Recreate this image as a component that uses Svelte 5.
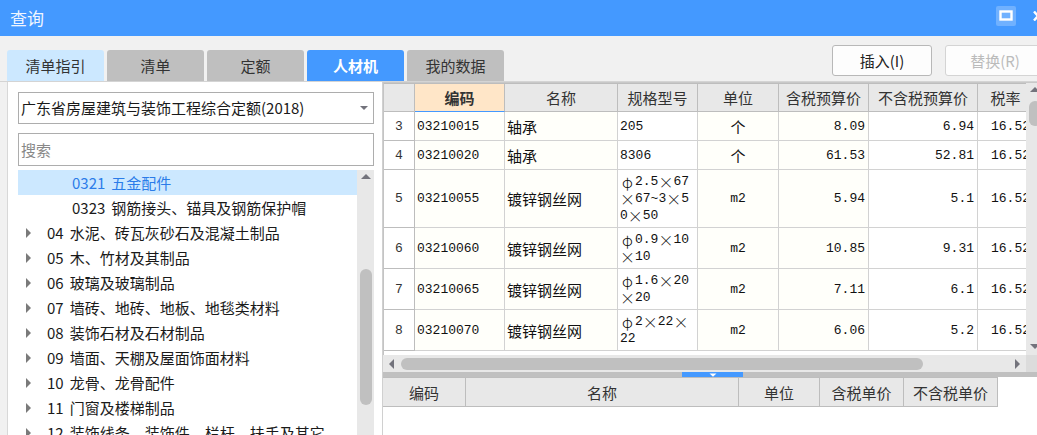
<script lang="ts">
  type TreeNode = { code: string; title: string; leaf?: boolean };
  type Material = {
    no: number;
    code: string;
    name: string;
    spec: string[];
    unit: string;
    taxed: string;
    untaxed: string;
    rate: string;
  };

  const tabs = ['清单指引', '清单', '定额', '人材机', '我的数据'];
  let activeTab = $state('人材机');
  const hoverTab = '清单指引';

  const library = '广东省房屋建筑与装饰工程综合定额(2018)';
  let keyword = $state('');

  const nodes: TreeNode[] = [
    { code: '0321', title: '五金配件', leaf: true },
    { code: '0323', title: '钢筋接头、锚具及钢筋保护帽', leaf: true },
    { code: '04', title: '水泥、砖瓦灰砂石及混凝土制品' },
    { code: '05', title: '木、竹材及其制品' },
    { code: '06', title: '玻璃及玻璃制品' },
    { code: '07', title: '墙砖、地砖、地板、地毯类材料' },
    { code: '08', title: '装饰石材及石材制品' },
    { code: '09', title: '墙面、天棚及屋面饰面材料' },
    { code: '10', title: '龙骨、龙骨配件' },
    { code: '11', title: '门窗及楼梯制品' },
    { code: '12', title: '装饰线条、装饰件、栏杆、扶手及其它' }
  ];
  let selected = $state('0321');

  const rows: Material[] = [
    { no: 3, code: '03210015', name: '轴承', spec: ['205'], unit: '个', taxed: '8.09', untaxed: '6.94', rate: '16.52' },
    { no: 4, code: '03210020', name: '轴承', spec: ['8306'], unit: '个', taxed: '61.53', untaxed: '52.81', rate: '16.52' },
    { no: 5, code: '03210055', name: '镀锌钢丝网', spec: ['φ2.5×67', '×67~3×5', '0×50'], unit: 'm2', taxed: '5.94', untaxed: '5.1', rate: '16.52' },
    { no: 6, code: '03210060', name: '镀锌钢丝网', spec: ['φ0.9×10', '×10'], unit: 'm2', taxed: '10.85', untaxed: '9.31', rate: '16.52' },
    { no: 7, code: '03210065', name: '镀锌钢丝网', spec: ['φ1.6×20', '×20'], unit: 'm2', taxed: '7.11', untaxed: '6.1', rate: '16.52' },
    { no: 8, code: '03210070', name: '镀锌钢丝网', spec: ['φ2×22×', '22'], unit: 'm2', taxed: '6.06', untaxed: '5.2', rate: '16.52' }
  ];

  // φ and × take a full-width cell, everything else is half-width
  function split(line: string): string[] {
    return line.split(/([φ×])/).filter((s) => s !== '');
  }
  const isWide = (s: string) => s === 'φ' || s === '×';
</script>

<div class="dialog">
  <header class="titlebar">
    <h1>查询</h1>
    <button type="button" class="win-btn boxed" aria-label="最大化">
      <svg width="14" height="12" viewBox="0 0 14 12"><rect x="1.5" y="1.5" width="11" height="8" fill="none" stroke="#fff" stroke-width="2.4" /></svg>
    </button>
    <button type="button" class="win-btn" aria-label="关闭">
      <svg width="10" height="10" viewBox="0 0 10 10"><path d="M1 0.5 9 9.5M9 0.5 1 9.5" stroke="#fff" stroke-width="2.4" /></svg>
    </button>
  </header>

  <div class="toolbar">
    <nav class="tabs">
      {#each tabs as tab}
        <button
          type="button"
          class="tab"
          class:active={tab === activeTab}
          class:hover={tab === hoverTab && tab !== activeTab}
          onclick={() => (activeTab = tab)}
        >{tab}</button>
      {/each}
    </nav>
    <div class="actions">
      <button type="button" class="action">插入(I)</button>
      <button type="button" class="action" disabled>替换(R)</button>
    </div>
  </div>

  <main class="content">
    <aside class="side">
      <div class="combo">
        <select aria-label="定额库">
          <option>{library}</option>
        </select>
        <span class="tri down small"></span>
      </div>
      <input class="search" type="text" placeholder="搜索" aria-label="搜索" bind:value={keyword} />

      <div class="tree-wrap">
        <ul class="tree">
          {#each nodes as node}
            <li>
              <button
                type="button"
                class="node"
                class:selected={node.code === selected}
                class:leaf={node.leaf}
                onclick={() => (selected = node.code)}
              >
                {#if !node.leaf}<span class="tri right"></span>{/if}
                <span class="node-code">{node.code}</span>
                <span>{node.title}</span>
              </button>
            </li>
          {/each}
        </ul>
        <div class="vscroll">
          <span class="tri up"></span>
          <div class="thumb tree-thumb"></div>
        </div>
      </div>
    </aside>

    <section class="main">
      <div class="grid-row">
        <div class="grid-clip">
          <table class="grid">
            <colgroup>
              <col class="c-no" /><col class="c-code" /><col class="c-name" /><col class="c-spec" />
              <col class="c-unit" /><col class="c-taxed" /><col class="c-untaxed" /><col class="c-rate" />
            </colgroup>
            <thead>
              <tr>
                <th></th>
                <th class="sorted">编码</th>
                <th>名称</th>
                <th>规格型号</th>
                <th>单位</th>
                <th>含税预算价</th>
                <th>不含税预算价</th>
                <th>税率</th>
              </tr>
            </thead>
            <tbody>
              {#each rows as row}
                <tr>
                  <td class="no">{row.no}</td>
                  <td class="tint">{row.code}</td>
                  <td class="tint cjk">{row.name}</td>
                  <td>
                    {#each row.spec as line}
                      <div class="spec-line">{#each split(line) as part}<span class:wide={isWide(part)}>{part}</span>{/each}</div>
                    {/each}
                  </td>
                  <td class="tint center" class:cjk={row.unit === '个'}>{row.unit}</td>
                  <td class="tint num">{row.taxed}</td>
                  <td class="num">{row.untaxed}</td>
                  <td class="num">{row.rate}</td>
                </tr>
              {/each}
            </tbody>
          </table>
        </div>
        <div class="vscroll grid-vscroll">
          <span class="tri up"></span>
          <div class="thumb grid-thumb"></div>
          <span class="tri down"></span>
        </div>
      </div>

      <div class="hscroll">
        <div class="htrack">
          <span class="tri left"></span>
          <div class="hthumb-area"><div class="hthumb"></div></div>
          <span class="tri right dark"></span>
        </div>
        <div class="corner"></div>
      </div>

      <div class="splitter">
        <button type="button" class="handle" aria-label="收起">
          <svg width="8" height="4" viewBox="0 0 8 4"><path d="M0.5 0.5H7.5L4 3.8Z" fill="#fff" /></svg>
        </button>
      </div>

      <div class="detail">
        <table class="grid lower">
          <colgroup>
            <col class="d-code" /><col class="d-name" /><col class="d-unit" /><col class="d-taxed" /><col class="d-untaxed" />
          </colgroup>
          <thead>
            <tr><th>编码</th><th>名称</th><th>单位</th><th>含税单价</th><th>不含税单价</th></tr>
          </thead>
        </table>
      </div>
    </section>
  </main>
</div>

<style>
  :global(body) { overflow: hidden; background: #f1f1f1; }

  .dialog {
    display: flex;
    flex-direction: column;
    height: 100vh;
    /* the window hangs over the right edge of the screen */
    margin-right: -16px;
    font-family: "Noto Sans CJK SC", "Noto Sans", sans-serif;
    font-size: 15px;
    line-height: 24px;
    color: #222;
  }
  button, input, select { font: inherit; color: inherit; box-sizing: border-box; }
  button { border: 0; padding: 0; background: none; }

  .titlebar {
    display: flex;
    align-items: center;
    gap: 14px;
    height: 36px;
    flex: none;
    padding: 0 7px 0 10px;
    background: #4499ff;
  }
  h1 {
    flex: 1;
    margin: 0;
    font-size: 17px;
    font-weight: 400;
    color: #f0f6ff;
  }
  .win-btn {
    display: grid;
    place-items: center;
    width: 16px;
    height: 20px;
    margin-bottom: 4px;
  }
  .win-btn.boxed { width: 20px; background: #70b1ff; border-radius: 2px; }

  .toolbar {
    display: flex;
    justify-content: space-between;
    align-items: flex-end;
    height: 46px;
    flex: none;
    padding: 0 8px 0 7px;
    box-sizing: border-box;
    background: #f1f1f1;
    border-bottom: 1px solid #d4d4d4;
  }
  .tabs { display: flex; gap: 3px; }
  .tab {
    width: 97px;
    height: 31px;
    background: #bfbfbf;
    border-radius: 3px 3px 0 0;
    color: #333;
  }
  .tab.hover { background: #cce8ff; }
  .tab.active { background: #4499ff; color: #fff; font-weight: 700; }
  .actions { display: flex; gap: 13px; padding-bottom: 5px; }
  .action {
    width: 100px;
    height: 31px;
    background: #fdfdfd;
    border: 1px solid #b8b8b8;
    border-radius: 3px;
  }
  .action:disabled { color: #bbb; border-color: #d4d4d4; }

  .content { display: flex; flex: 1; min-height: 0; }

  .side {
    display: flex;
    flex-direction: column;
    width: 376px;
    flex: none;
    box-sizing: border-box;
    margin-left: 7px;
    padding: 10px 8px 0 10px;
    background: #fff;
    border-left: 1px solid #d8d8d8;
    border-right: 1px solid #d0d0d0;
    color: #1a1a1a;
  }
  .combo { position: relative; margin-bottom: 9px; }
  .combo select, .search {
    display: block;
    width: 100%;
    height: 32px;
    padding: 0 2px;
    appearance: none;
    background: #fff;
    border: 1px solid #adadad;
    border-radius: 0;
    outline: none;
  }
  .combo .tri { position: absolute; right: 6px; top: 14px; }
  .search { height: 33px; flex: none; }
  .search::placeholder { color: #888; opacity: 1; }

  .tree-wrap { display: flex; flex: 1; min-height: 0; margin-top: 4px; }
  .tree {
    flex: 1;
    min-width: 0;
    margin: 0;
    padding: 0;
    list-style: none;
    overflow: hidden;
  }
  .node {
    display: flex;
    align-items: center;
    gap: 6px;
    width: 100%;
    height: 25px;
    padding-left: 8px;
    white-space: nowrap;
  }
  .node .tri { margin-right: 10px; }
  .node.leaf { padding-left: 54px; }
  .node.selected { background: #cce8ff; color: #2b7ce9; }

  .tri { flex: none; width: 0; height: 0; border: 5px solid transparent; }
  .tri.up { border-top: 0; border-bottom-color: #73737c; }
  .tri.down { border-bottom: 0; border-top-color: #73737c; }
  .tri.left { border-left: 0; border-right-color: #73737c; }
  .tri.right { border-right: 0; border-left-color: #7a7a7a; }
  .tri.dark { border-left-color: #73737c; }
  .tri.small { border-width: 4px 4px 0; }

  .vscroll {
    display: flex;
    flex-direction: column;
    align-items: center;
    width: 17px;
    flex: none;
    padding-top: 4px;
    box-sizing: border-box;
    background: #e8e8e8;
    overflow: hidden;
  }
  .thumb { width: 12px; flex: none; border-radius: 6px; background: #c0c0c0; }
  .tree-thumb { height: 136px; margin-top: 90px; }
  .grid-thumb { height: 25px; margin: 9px 0 auto; }

  .main {
    display: flex;
    flex-direction: column;
    flex: 1;
    min-width: 0;
    background: #fff;
    border-top: 1px solid #c8c8c8;
  }
  .grid-row { display: flex; }
  .grid-clip { flex: 1; min-width: 0; overflow: hidden; padding-bottom: 4px; border-left: 1px solid #c4c4c4; }
  .grid-vscroll { margin-right: 10px; padding-bottom: 6px; }

  .grid {
    width: 650px;
    table-layout: fixed;
    border-collapse: separate;
    border-spacing: 0;
    font-family: "Liberation Mono", "Noto Sans CJK SC", monospace;
    font-size: 13px;
    line-height: 17px;
    color: #111;
  }
  .c-no { width: 31px; }
  .c-code { width: 90px; }
  .c-name { width: 113px; }
  .c-spec { width: 80px; }
  .c-unit { width: 81px; }
  .c-taxed { width: 90px; }
  .c-untaxed { width: 109px; }
  .c-rate { width: 56px; }

  th {
    height: 29px;
    box-sizing: border-box;
    padding: 0;
    background: #e8e8e8;
    border: solid #bdbdbd;
    border-width: 1px 1px 1px 0;
    font-family: "Noto Sans CJK SC", sans-serif;
    font-size: 15px;
    font-weight: 400;
    white-space: nowrap;
    color: #333;
  }
  th.sorted { background: #ffe6c8; border-bottom-color: #4499ff; font-weight: 700; }
  td {
    height: 29px;
    box-sizing: border-box;
    padding: 3px 2px;
    border: solid #d2d2d2;
    border-width: 0 1px 1px 0;
    white-space: nowrap;
  }
  .tint { background: #fffffa; }
  .no { text-align: center; border-color: #bdbdbd; color: #333; }
  .center { text-align: center; }
  .num { text-align: right; padding-right: 3px; }
  .cjk { font-family: "Noto Sans CJK SC", sans-serif; font-size: 15px; }
  .spec-line { display: flex; height: 17px; }
  .wide {
    width: 15px;
    text-align: center;
    font-family: "Noto Sans CJK SC", sans-serif;
    font-size: 15px;
    font-weight: 300;
  }

  .hscroll { display: flex; height: 17px; flex: none; }
  .htrack {
    display: flex;
    align-items: center;
    flex: 1;
    gap: 7px;
    padding: 0 6px;
    background: #e8e8e8;
  }
  .hthumb-area { flex: 1; }
  .hthumb { width: 86%; height: 12px; border-radius: 6px; background: #c0c0c0; }
  .corner { width: 27px; background: #dcdcdc; }

  .splitter {
    display: flex;
    justify-content: center;
    height: 5px;
    flex: none;
    padding-right: 11px;
    background: #c0c0c0;
  }
  .handle { display: grid; place-items: center; width: 61px; height: 5px; background: #4499ff; }

  .detail { flex: 1; min-height: 0; overflow: hidden; }
  .lower { width: 615px; }
  .lower th { height: 30px; }
  .d-code { width: 83px; }
  .d-name { width: 273px; }
  .d-unit { width: 81px; }
  .d-taxed { width: 84px; }
  .d-untaxed { width: 94px; }
</style>
